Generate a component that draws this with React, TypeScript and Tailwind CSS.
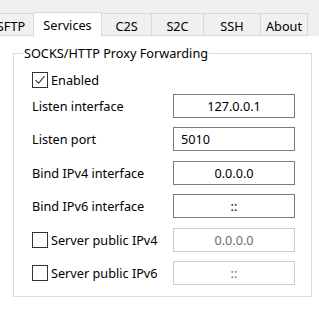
import React from "react";

const F = { fontFamily: '"Noto Sans", "Segoe UI", sans-serif' };

function Tab({ label, w, selected, cls = "" }: { label: string; w: number; selected?: boolean; cls?: string }) {
  if (selected) {
    return (
      <div
        className={`relative z-10 flex h-[25px] items-start justify-center border-x border-t border-[#d9d9d9] bg-white pt-[4px] ${cls}`}
        style={{ width: w }}
      >
        {label}
      </div>
    );
  }
  return (
    <div
      className={`flex h-[23px] items-center justify-center border-y border-r border-[#d9d9d9] bg-[#f0f0f0] pt-[2px] ${cls}`}
      style={{ width: w }}
    >
      {label}
    </div>
  );
}

function Check({ checked }: { checked?: boolean }) {
  return (
    <div className="flex h-[16px] w-[16px] shrink-0 items-center justify-center border border-[#333333] bg-white">
      {checked && (
        <svg width="12" height="12" viewBox="0 0 12 12">
          <path d="M1.5 6.2 L4.6 9.2 L10.6 2.2" fill="none" stroke="#3a3a3a" strokeWidth="1.1" />
        </svg>
      )}
    </div>
  );
}

function Field({ value, disabled, left }: { value: string; disabled?: boolean; left?: boolean }) {
  return (
    <div
      className={`flex h-[24px] w-[122px] items-center border ${
        disabled ? "border-[#cccccc] text-[#6d6d6d]" : "border-[#7a7a7a] text-[#000000]"
      } ${left ? "justify-start pl-[7px]" : "justify-center"} bg-white`}
    >
      {value}
    </div>
  );
}

function Row({ label, value, check, disabled, left, cls = "" }: { label: string; value: string; check?: boolean; disabled?: boolean; left?: boolean; cls?: string }) {
  return (
    <div className={`flex h-[24px] items-center ${cls}`}>
      <div className="flex w-[141px] items-center gap-[3px]">
        {check && <Check />}
        <span>{label}</span>
      </div>
      <Field value={value} disabled={disabled} left={left} />
    </div>
  );
}

export default function App() {
  return (
    <div className="h-[316px] w-[319px] overflow-hidden bg-white text-[12.7px] leading-[16px] text-[#000000]" style={F}>
      <div className="flex h-[36px] items-end bg-[#f0f0f0]">
        <Tab label="SFTP" w={45} cls="ml-[-11px]" />
        <Tab label="Services" w={69} selected cls="ml-[-1px] mb-[-1px]" />
        <Tab label="C2S" w={50} />
        <Tab label="S2C" w={52} />
        <Tab label="SSH" w={57} />
        <Tab label="About" w={47} />
      </div>
      <fieldset className="mt-[9px] ml-[13px] w-[299px] border border-[#dcdcdc] pl-[9px] pb-[11px]">
        <legend className="px-[1px]">SOCKS/HTTP Proxy Forwarding</legend>
        <div className="flex flex-col pl-[9px] pt-[11px]">
          <div className="flex h-[16px] items-center gap-[3px]">
            <Check checked />
            <span>Enabled</span>
          </div>
          <Row label="Listen interface" value="127.0.0.1" cls="mt-[6px]" />
          <Row label="Listen port" value="5010" left cls="mt-[9px]" />
          <Row label="Bind IPv4 interface" value="0.0.0.0" cls="mt-[10px]" />
          <Row label="Bind IPv6 interface" value="::" cls="mt-[9px]" />
          <Row label="Server public IPv4" value="0.0.0.0" check disabled cls="mt-[10px]" />
          <Row label="Server public IPv6" value="::" check disabled cls="mt-[9px]" />
        </div>
      </fieldset>
    </div>
  );
}
